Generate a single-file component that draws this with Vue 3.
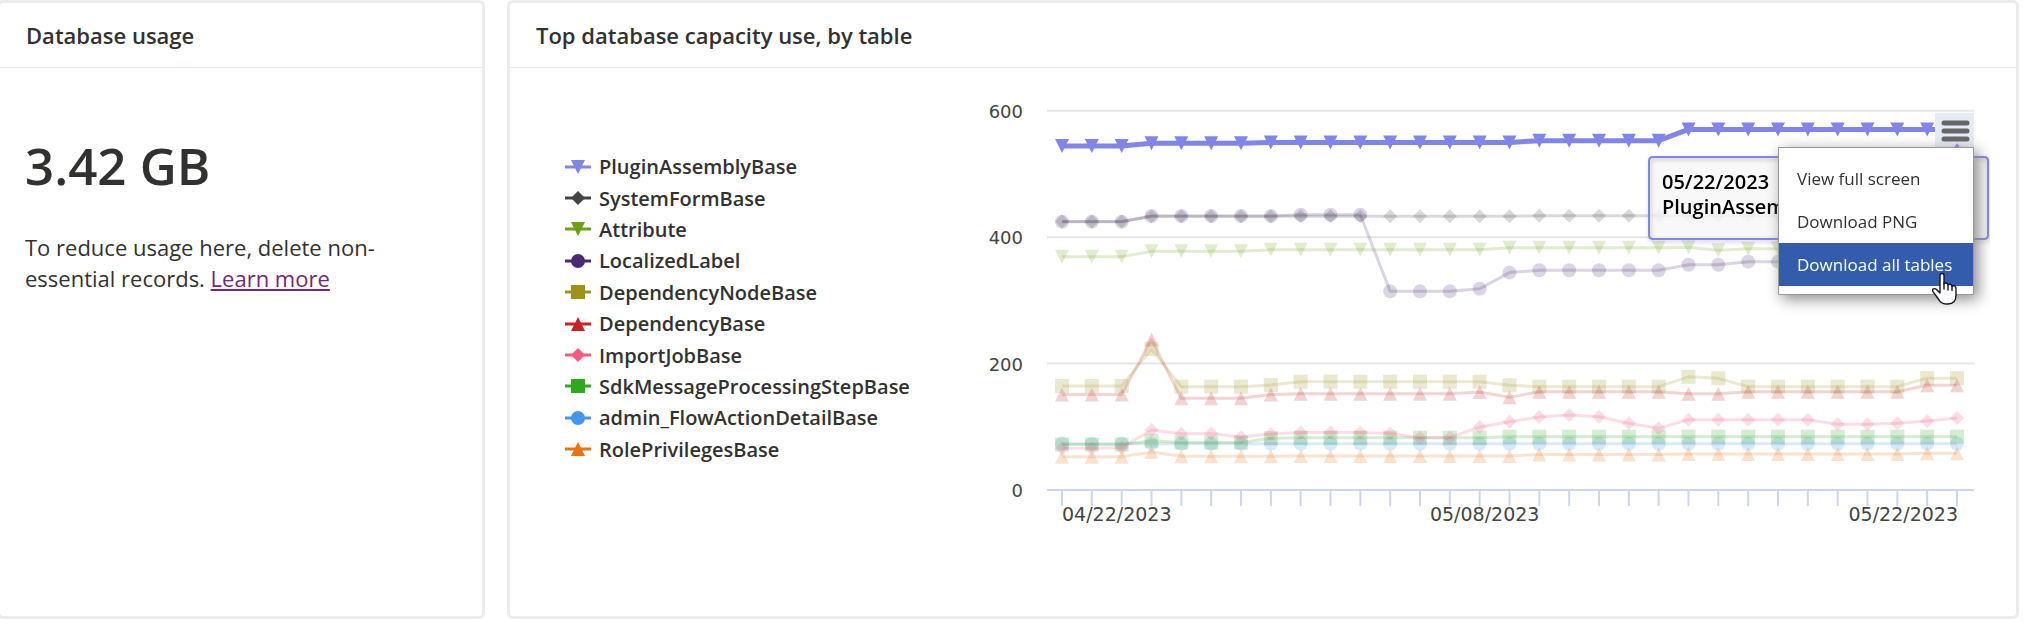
<script setup>
import { computed, onBeforeUnmount, onMounted, ref } from 'vue'

const rep = (...pairs) => pairs.flatMap(([value, count]) => Array(count).fill(value))

const series = [
  { name: 'RolePrivilegesBase', color: '#eb730d', shape: 'up', data: rep([52.7, 3], [60, 1], [53.3, 4], [53.8, 8], [56, 5], [57, 8], [58, 2]) },
  { name: 'admin_FlowActionDetailBase', color: '#4296ec', shape: 'circle', data: rep([73, 31]) },
  { name: 'SdkMessageProcessingStepBase', color: '#2fa81c', shape: 'square', data: rep([72, 3], [78, 1], [75, 3], [82, 1], [82.8, 7], [84.4, 16]) },
  { name: 'ImportJobBase', color: '#f45b82', shape: 'diamond', data: [66, 66, 67, 95, 89, 89.5, 84, 88.6, 91, 91, 91, 89.5, 82.8, 82.8, 99.7, 108, 115.5, 118.7, 116, 105.5, 97.6, 111.3, 111.3, 111.3, 111.3, 111.3, 104, 104, 105.5, 109, 114] },
  { name: 'DependencyBase', color: '#c62422', shape: 'up', data: rep([151, 3], [238, 1], [145, 3], [151, 1], [152.4, 6], [155, 1], [146.6, 1], [155.6, 5], [152.4, 2], [155.6, 6], [165.6, 2]) },
  { name: 'DependencyNodeBase', color: '#a0911b', shape: 'square', data: rep([164.6, 3], [223, 1], [163.5, 3], [166, 1], [171.4, 7], [165.6, 1], [163.5, 5], [179, 1], [176.7, 1], [163.5, 6], [177, 2]) },
  { name: 'LocalizedLabel', color: '#4b2a73', shape: 'circle', data: rep([424.6, 3], [433.5, 5], [435.6, 3], [314.3, 3], [318.5, 1], [344, 1], [347.6, 5], [356.5, 2], [361.3, 8]) },
  { name: 'Attribute', color: '#6ba012', shape: 'down', data: rep([369, 3], [377.6, 4], [380.3, 8], [383.2, 6], [384, 1], [379.2, 1], [381.8, 8]) },
  { name: 'SystemFormBase', color: '#434348', shape: 'diamond', data: rep([425, 3], [433, 13], [434, 15]) },
  { name: 'PluginAssemblyBase', color: '#8085e9', shape: 'down', active: true, data: rep([544.3, 3], [548.5, 4], [550, 9], [552.7, 5], [570.6, 10]) },
]
const legend = [...series].reverse()

const markers = {
  up: 'M-7 7L0 -7L7 7Z',
  down: 'M-7 -7L7 -7L0 7Z',
  diamond: 'M0 -7L7 0L0 7L-7 0Z',
  square: 'M-7 -7H7V7H-7Z',
  circle: 'M-7 0A7 7 0 1 1 7 0A7 7 0 1 1 -7 0Z',
}

const chart = ref(null)
const width = ref(1030)
let observer
onMounted(() => {
  const measure = () => { width.value = Math.max(chart.value.clientWidth, 400) }
  measure()
  observer = new ResizeObserver(measure)
  observer.observe(chart.value)
})
onBeforeUnmount(() => observer?.disconnect())

const left = 87
const right = computed(() => width.value - 16)
const baseline = 422
const yOf = (value) => baseline - value * 0.632
const xOf = (i) => left + 15 + (i * (right.value - left - 32)) / 30
const lineOf = (s) => s.data.map((v, i) => `${xOf(i)},${yOf(v)}`).join(' ')
const gridlines = [600, 400, 200, 0]

const tipPath = computed(() => {
  const l = width.value - 341
  const r = width.value - 2
  const p = xOf(30)
  return `M${l + 4} 89H${p - 8}L${p} 77L${p + 8} 89H${r - 4}Q${r} 89 ${r} 93V167Q${r} 171 ${r - 4} 171H${l + 4}Q${l} 171 ${l} 167V93Q${l} 89 ${l + 4} 89Z`
})
</script>

<template>
  <main class="page">
    <section class="card usage">
      <h2 class="title">Database usage</h2>
      <div class="usage-body">
        <p class="amount">3.42 GB</p>
        <p class="hint">To reduce usage here, delete non-essential records. <a href="#">Learn more</a></p>
      </div>
    </section>

    <section class="card tables">
      <h2 class="title">Top database capacity use, by table</h2>
      <div class="tables-body">
        <ul class="legend">
          <li v-for="s in legend" :key="s.name">
            <svg class="key" width="26" height="16" viewBox="-13 -8 26 16" aria-hidden="true">
              <path d="M-13 0H13" :stroke="s.color" stroke-width="3" />
              <path :d="markers[s.shape]" :fill="s.color" />
            </svg>
            {{ s.name }}
          </li>
        </ul>

        <div ref="chart" class="chart">
          <svg class="plot" :width="width" height="480" role="img" aria-label="Database capacity by table">
            <g class="grid">
              <line v-for="g in gridlines.slice(0, 3)" :key="g" :x1="left" :x2="right" :y1="yOf(g)" :y2="yOf(g)" />
            </g>
            <g class="axis">
              <line :x1="left" :x2="right" :y1="baseline" :y2="baseline" />
              <line v-for="i in 31" :key="i" :x1="xOf(i - 1)" :x2="xOf(i - 1)" :y1="baseline" :y2="baseline + 16" />
            </g>
            <g class="labels">
              <text v-for="g in gridlines" :key="g" x="63" :y="yOf(g) + 7" text-anchor="end">{{ g }}</text>
            </g>
            <g class="labels dates">
              <text :x="xOf(0)" y="453">04/22/2023</text>
              <text :x="xOf(14) + 5" y="453" text-anchor="middle">05/08/2023</text>
              <text :x="xOf(30) + 1" y="453" text-anchor="end">05/22/2023</text>
            </g>
            <template v-for="s in series" :key="s.name">
              <polyline :class="['line', { active: s.active }]" :points="lineOf(s)" :stroke="s.color" />
              <g :class="['marks', { active: s.active }]" :fill="s.color">
                <path v-for="(v, i) in s.data" :key="i" :d="markers[s.shape]" :transform="`translate(${xOf(i)} ${yOf(v)})`" />
              </g>
            </template>
          </svg>

          <button class="menu-button" type="button" aria-label="Chart menu">
            <svg width="39" height="35" viewBox="0 0 39 35">
              <path d="M9 10H32M9 18H32M9 26H32" stroke="#666" stroke-width="5" stroke-linecap="round" />
            </svg>
          </button>

          <svg class="tip" :width="width" height="190">
            <path class="tip-fill" :d="tipPath" />
            <path class="tip-edge" :d="tipPath" />
            <text :x="width - 328" y="121">05/22/2023</text>
            <text :x="width - 328" y="146">PluginAssemblyBase</text>
          </svg>

          <div class="menu">
            <button type="button">View full screen</button>
            <button type="button">Download PNG</button>
            <button type="button" class="selected">Download all tables</button>
            <svg class="cursor" width="27" height="34" viewBox="0 0 27 34" aria-hidden="true">
              <path d="M9 3.5C9 .8 13 .8 13 3.5V12C13.6 10.4 16.8 10.6 17 13C18 11.6 20.8 12 21 14.4C22.4 13 25 13.8 25 16.4V23C25 28.6 22 32 17 32H15C11 32 9 30 7.4 27L2 19.6C.4 17 3.6 15.6 5.6 17.6L9 21Z" fill="#fff" stroke="#16161f" stroke-width="1.4" stroke-linejoin="round" />
              <path d="M13 11V17M17 13V18M21 14.5V18.5" fill="none" stroke="#16161f" stroke-width="1.4" stroke-linecap="round" />
            </svg>
          </div>
        </div>
      </div>
    </section>
  </main>
</template>

<style>
body {
  background: #fff;
}
</style>

<style scoped>
.page {
  display: flex;
  gap: 22px;
  margin-left: -3px;
  padding-right: 11px;
  font-family: "Open Sans", "Noto Sans", sans-serif;
  color: #323130;
}
.card {
  box-sizing: border-box;
  min-height: 619px;
  border: 3px solid #ebebeb;
  border-radius: 6px;
  background: #fff;
}
.usage {
  flex: 0 0 488px;
}
.tables {
  flex: 1;
  min-width: 0;
}
.title {
  margin: 0;
  padding: 1px 26px 0;
  border-bottom: 1px solid #eaeaea;
  font-size: 22px;
  font-weight: 600;
  line-height: 63px;
}
.usage-body {
  padding: 55px 64px 0 25px;
}
.amount {
  margin: 0;
  font-size: 51px;
  font-weight: 600;
  line-height: 84px;
}
.hint {
  margin: 25px 0 0;
  font-size: 22px;
  line-height: 31px;
}
.hint a {
  color: #742774;
}
.tables-body {
  display: flex;
  padding-right: 26px;
}
.legend {
  box-sizing: border-box;
  display: grid;
  align-content: start;
  grid-template-rows: repeat(10, 1fr);
  flex: 0 0 395px;
  height: 314px;
  margin: 83px 0 0 55px;
  padding: 0;
  list-style: none;
  font-size: 20px;
  font-weight: 600;
}
.legend li {
  display: flex;
  align-items: center;
  gap: 8px;
}
.chart {
  position: relative;
  flex: 1;
  min-width: 0;
  overflow: hidden;
}
.plot {
  display: block;
}
.grid line {
  stroke: #e6e6e6;
  stroke-width: 2;
}
.axis line {
  stroke: #ccd6eb;
  stroke-width: 2;
}
.labels text {
  font-family: "DejaVu Sans", sans-serif;
  font-size: 18px;
  fill: #444;
}
.dates text {
  font-size: 19px;
}
.line {
  fill: none;
  stroke-width: 3;
  stroke-linejoin: round;
  opacity: 0.2;
}
.line.active {
  stroke-width: 5;
  opacity: 1;
}
.marks {
  opacity: 0.2;
}
.marks.active {
  opacity: 1;
}
.menu-button {
  position: absolute;
  top: 45px;
  right: 16px;
  padding: 0;
  border: 0;
  background: #e6ebf5;
  line-height: 0;
}
.tip {
  position: absolute;
  top: 0;
  left: 0;
}
.tip-fill {
  fill: rgba(247, 247, 247, 0.85);
}
.tip-edge {
  fill: none;
  stroke: #8085e9;
  stroke-width: 2;
  filter: drop-shadow(1px 2px 2px rgba(0, 0, 0, 0.25));
}
.tip text {
  font-size: 20px;
  font-weight: 600;
  fill: #000;
}
.menu {
  box-sizing: border-box;
  position: absolute;
  top: 79px;
  right: 16px;
  display: flex;
  flex-direction: column;
  width: 196px;
  padding: 9px 0 8px;
  border: 1px solid #999;
  background: #fff;
  box-shadow: 4px 4px 14px #888;
}
.menu button {
  padding: 0 18px;
  border: 0;
  background: none;
  color: #323130;
  font: inherit;
  font-size: 17px;
  line-height: 43px;
  text-align: left;
  white-space: nowrap;
}
.menu .selected {
  background: #335cad;
  color: #fff;
}
.cursor {
  position: absolute;
  right: 15px;
  bottom: -12px;
}
</style>
